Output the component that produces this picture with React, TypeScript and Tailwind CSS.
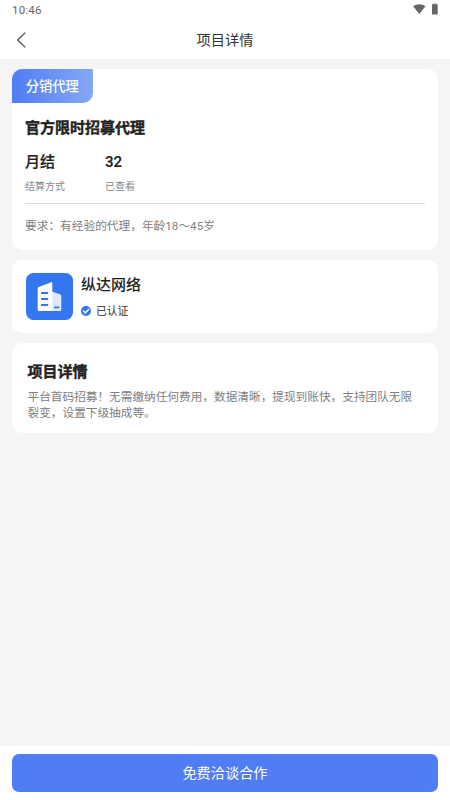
import React from 'react';

interface StatProps {
  value: string;
  label: string;
}

const StatusBar: React.FC = () => (
  <div className="flex h-5 items-center justify-between pl-3 pr-[12.5px]">
    <span className="text-[11.5px] leading-5 tracking-[0.2px] text-[#666]">10:46</span>
    <div className="flex items-center gap-[6px] -mt-[2px]">
      <svg className="h-[10px] w-[13px]" viewBox="0 0 13 10" fill="#666">
        <path d="M6.3 10 L0.1 2.3 C3.4 -0.5 9.2 -0.5 12.5 2.3 Z" />
      </svg>
      <svg className="h-[12px] w-[6px]" viewBox="0 0 6 12">
        <path d="M1.2 0.3h3v1.5h-3z" fill="#aaa" />
        <rect x="-0.3" y="1.2" width="6" height="10.3" rx="0.6" fill="#666" />
      </svg>
    </div>
  </div>
);

const Header: React.FC = () => (
  <div className="grid h-[39px] grid-cols-3 items-center">
    <button className="ml-4 w-fit">
      <svg className="h-4 w-[10px]" viewBox="0 0 10 16" fill="none" stroke="#444" strokeWidth="1.2">
        <path d="M9.3 0.6 L1.6 8 L9.3 15.4" />
      </svg>
    </button>
    <h1 className="text-center text-[14.2px] leading-5 text-[#333]">项目详情</h1>
  </div>
);

const Stat: React.FC<StatProps> = ({ value, label }) => (
  <div className="w-20">
    <div className="text-[15px] leading-[22px] font-medium text-[#222] [-webkit-text-stroke:0.2px_#222]">{value}</div>
    <div className="mt-[7px] text-[10px] leading-[14px] text-[#888]">{label}</div>
  </div>
);

const CompanyLogo: React.FC = () => (
  <svg className="h-[47px] w-[47px]" viewBox="0 0 47 47">
    <rect width="47" height="47" rx="7.5" fill="#3475f0" />
    <path d="M25.5 18.4 L34 21.2 Q35.3 21.7 35.3 23 V36.8 Q35.3 38 34.1 38 H25.5 Z" fill="#dfe8fc" />
    <path d="M12.6 14 Q11.7 14.4 11.7 15.5 V36.8 Q11.7 38 12.9 38 H26.3 V9.8 Q26.3 8.8 25.3 9.2 Z" fill="#fff" />
    <path d="M15 20h7.2M15 26h7.2M15 32h7.2M28 34.4h5.4" stroke="#3475f0" strokeWidth="1.8" />
  </svg>
);

const VerifiedIcon: React.FC = () => (
  <svg className="h-[10px] w-[10px]" viewBox="0 0 10 10">
    <circle cx="5" cy="5" r="5" fill="#3475f0" />
    <path d="M2.2 4.8 L4.4 7 L8 3" fill="none" stroke="#fff" strokeWidth="1.5" />
  </svg>
);

const App: React.FC = () => {
  return (
    <div className="flex h-[800px] w-full flex-col bg-[#f5f5f5] font-[Roboto,'Noto_Sans_CJK_SC',sans-serif]">
      <header className="h-[59px] bg-white">
        <StatusBar />
        <Header />
      </header>

      <main className="flex flex-1 flex-col gap-[10px] px-3 pt-[10px]">
        <section className="h-[181px] overflow-hidden rounded-[10px] bg-white">
          <div className="flex h-[33.5px] w-[80.5px] items-center justify-center rounded-br-[10px] bg-linear-to-r from-[#507cf4] to-[#85a8f7] pt-[2px] text-[13.3px] font-medium text-white">
            分销代理
          </div>
          <div className="px-[13px]">
            <h2 className="mt-[14px] text-[15px] leading-[22px] font-bold text-[#222] [-webkit-text-stroke:0.4px_#222]">
              官方限时招募代理
            </h2>
            <div className="mt-3 flex">
              <Stat value="月结" label="结算方式" />
              <Stat value="32" label="已查看" />
            </div>
            <p className="mt-[9px] border-t border-[#ddd] pt-[14px] text-[11.7px] leading-[17px] text-[#808080]">
              要求：有经验的代理，年龄18～45岁
            </p>
          </div>
        </section>

        <section className="flex h-[73px] items-center rounded-[10px] bg-white pl-[14px]">
          <CompanyLogo />
          <div className="ml-2">
            <div className="text-[15px] leading-[22px] font-medium text-[#222]">纵达网络</div>
            <div className="mt-[7px] flex items-center gap-[5px] text-[10.8px] leading-4 text-[#333]">
              <VerifiedIcon />
              <span className="relative top-px">已认证</span>
            </div>
          </div>
        </section>

        <section className="h-[90px] rounded-[10px] bg-white pt-[18px] pl-[15.5px] pr-4">
          <h2 className="text-[15px] leading-[22px] font-bold text-[#222] [-webkit-text-stroke:0.4px_#222]">项目详情</h2>
          <p className="mt-[5.5px] text-[11.67px] leading-[16.7px] text-[#808080]">
            平台首码招募！无需缴纳任何费用，数据清晰，提现到账快，支持团队无限裂变，设置下级抽成等。
          </p>
        </section>
      </main>

      <footer className="h-[54px] bg-white px-3 pt-2">
        <button className="h-[38px] w-full rounded-[7px] bg-[#507cf4] pt-[2px] text-[14.2px] text-white">免费洽谈合作</button>
      </footer>
    </div>
  );
};

export default App;
